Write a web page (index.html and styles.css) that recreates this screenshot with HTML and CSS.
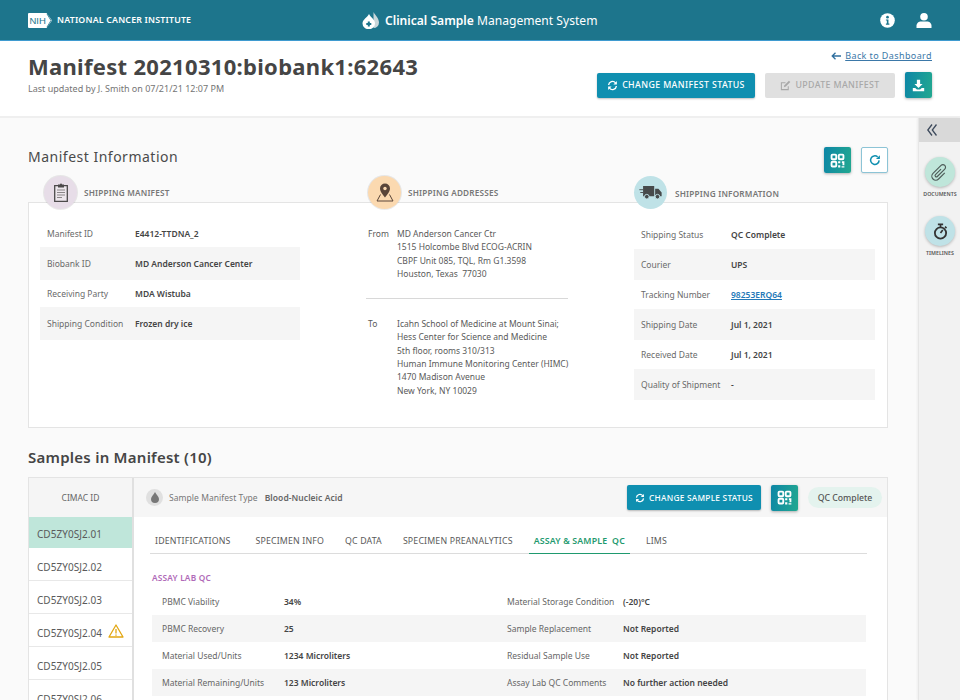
FILE: index.html
```html
<!DOCTYPE html>
<html lang="en">
<head>
<meta charset="utf-8">
<title>Manifest</title>
<link rel="stylesheet" href="styles.css">
</head>
<body>
<svg class="defs" width="0" height="0" aria-hidden="true">
  <symbol id="i-refresh" viewBox="0 0 24 24">
    <path d="M3.500 11A8.600 8.600 0 0 1 18.600 6.200" fill="none" stroke="currentColor" stroke-width="3"/>
    <path d="M21.500 2.200v7.600h-7.600z" fill="currentColor"/>
    <path d="M20.500 13A8.600 8.600 0 0 1 5.400 17.800" fill="none" stroke="currentColor" stroke-width="3"/>
    <path d="M2.500 21.800v-7.600h7.600z" fill="currentColor"/>
  </symbol>
  <symbol id="i-qr" viewBox="0 0 24 24">
    <rect x="2.500" y="2.500" width="7.500" height="7.500" rx="1.500" fill="none" stroke="currentColor" stroke-width="3"/>
    <rect x="14" y="2.500" width="7.500" height="7.500" rx="1.500" fill="none" stroke="currentColor" stroke-width="3"/>
    <rect x="2.500" y="14" width="7.500" height="7.500" rx="1.500" fill="none" stroke="currentColor" stroke-width="3"/>
    <path fill="currentColor" d="M13 13h3.500v3.500H13zM19 13h4v6.500h-3V16h-1zM13 19.500h3.500V23H13zM18.500 21h4.500v2h-4.500z"/>
  </symbol>
</svg>

<header class="topbar">
  <div class="brand">
    <svg class="nih" width="24" height="15" viewBox="0 0 24 15"><path d="M1 0h17.500l5.500 7.500-5.500 7.500H1a1 1 0 0 1-1-1V1a1 1 0 0 1 1-1z" fill="#fff"/><path d="M19 1l4 6.500-4 6.500" fill="none" stroke="#1d758c" stroke-width=".8"/><text x="1.500" y="11.300" class="nih-text">NIH</text></svg>
    <span class="nci">NATIONAL CANCER INSTITUTE</span>
  </div>
  <div class="app">
    <svg width="17" height="18" viewBox="0 0 17 18"><path d="M11.500 1c1.500 3 5.500 6 5.500 10.500a5.500 5.500 0 0 1-5.500 5.500z" fill="#c9d7db"/><path d="M7 3c1.800 3.500 6 5.500 6 9.500a6 5.500 0 0 1-12.500 0C.500 8.500 5.200 6.500 7 3z" fill="#fff"/><path d="M5.800 10.500h2V12h1.500v2H7.800v1.500h-2V14H4.300v-2h1.500z" fill="#1d758c"/></svg>
    <span class="app-name"><b>Clinical Sample</b> Management System</span>
  </div>
  <div class="top-icons">
    <svg width="15" height="15" viewBox="0 0 16 16"><circle cx="8" cy="8" r="7.800" fill="#fff"/><circle cx="8" cy="4.400" r="1.400" fill="#1d758c"/><path d="M6.300 6.800h2.700v4.400h1v1.300H6.300v-1.300h1V8H6.300z" fill="#1d758c"/></svg>
    <svg width="16" height="15" viewBox="0 0 16 15"><circle cx="8" cy="3.800" r="3.800" fill="#fff"/><path d="M0.500 15v-2.300C0.500 10 3 8.500 5 8.500h6c2 0 4.500 1.500 4.500 4.200V15z" fill="#fff"/></svg>
  </div>
</header>

<section class="pagehead">
  <div class="pagehead-text">
    <h1>Manifest 20210310:biobank1:62643</h1>
    <p>Last updated by J. Smith on 07/21/21 12:07 PM</p>
  </div>
  <div class="pagehead-actions">
    <a class="back"><svg width="10" height="8" viewBox="0 0 10 8"><path d="M10 4H1.500M4.500 .7L1.200 4l3.300 3.300" fill="none" stroke="#2f6f9f" stroke-width="1.300"/></svg><u>Back to Dashboard</u></a>
    <div class="btn-row">
      <button class="btn btn-blue btn-manifest"><svg class="ico"><use href="#i-refresh"/></svg>CHANGE MANIFEST STATUS</button>
      <button class="btn btn-off"><svg class="ico" viewBox="0 0 16 16"><path d="M12 9v5H2V4h6" fill="none" stroke="currentColor" stroke-width="1.500"/><path d="M5.500 10.500l1-3L13 1l2 2-6.500 6.500z" fill="currentColor"/></svg>UPDATE MANIFEST</button>
      <button class="btn-square grad"><svg width="13" height="13" viewBox="0 0 16 16"><path d="M6 1h4v5h3L8 11 3 6h3z" fill="#fff"/><path d="M1 11h3l2 2h4l2-2h3v4H1z" fill="#fff"/></svg></button>
    </div>
  </div>
</section>

<div class="layout">
  <main class="content">
    <div class="info-head">
      <h2>Manifest Information</h2>
      <div class="info-tools">
        <button class="btn-square grad"><svg class="qr"><use href="#i-qr"/></svg></button>
        <button class="btn-square outline"><svg width="12" height="12" viewBox="0 0 16 16"><path d="M13.500 8.500A5.700 5.700 0 1 1 11.500 3.800" fill="none" stroke="#0f8fb0" stroke-width="2"/><path d="M14.500 1.500v5.200H9.300z" fill="#0f8fb0"/></svg></button>
      </div>
    </div>

    <div class="info-heads">
      <div class="ih ih-a">
        <span class="disc disc-purple"><svg width="14" height="19" viewBox="0 0 14 19"><path d="M.7 2.700h12.600v15.600H.7z" fill="#ece6ec" stroke="#4c4a4b" stroke-width="1.300"/><path d="M4 1.500h2a1 1 0 0 1 2 0h2v3H4z" fill="#4c4a4b"/><path d="M3 7h8M3 9.500h8M3 12h8M3 14.500h5" stroke="#8a8688" stroke-width="1"/></svg></span>
        <span class="ih-label">SHIPPING MANIFEST</span>
      </div>
      <div class="ih ih-b">
        <span class="disc disc-orange"><svg width="18" height="19" viewBox="0 0 18 19"><path d="M4.500 11.500L1 18h16l-3.500-6.500" fill="none" stroke="#5a4538" stroke-width="1"/><path d="M9 .5a5 5 0 0 1 5 5C14 9 9 14.500 9 14.500S4 9 4 5.500a5 5 0 0 1 5-5z" fill="#5a4538"/><circle cx="9" cy="5.500" r="1.700" fill="#fbd9b0"/></svg></span>
        <span class="ih-label">SHIPPING ADDRESSES</span>
      </div>
      <div class="ih ih-c">
        <span class="disc disc-blue"><svg width="23" height="13" viewBox="0 0 24 14"><path d="M4 0h12v11H4zM17 3h3.500L24 7v4h-7z" fill="#464a4b"/><path d="M0 4h4M1 7h3" stroke="#464a4b"/><circle cx="8" cy="11.500" r="2.500" fill="#464a4b" stroke="#bfe2e7"/><circle cx="19.500" cy="11.500" r="2.500" fill="#464a4b" stroke="#bfe2e7"/></svg></span>
        <span class="ih-label">SHIPPING INFORMATION</span>
      </div>
    </div>

    <div class="info-card">
      <dl class="kv kv-left">
        <div><dt>Manifest ID</dt><dd>E4412-TTDNA_2</dd></div>
        <div><dt>Biobank ID</dt><dd>MD Anderson Cancer Center</dd></div>
        <div><dt>Receiving Party</dt><dd>MDA Wistuba</dd></div>
        <div><dt>Shipping Condition</dt><dd>Frozen dry ice</dd></div>
      </dl>
      <div class="addr">
        <div class="addr-row addr-from">
          <span class="addr-k">From</span>
          <address>MD Anderson Cancer Ctr<br>1515 Holcombe Blvd ECOG-ACRIN<br>CBPF Unit 085, TQL, Rm G1.3598<br>Houston, Texas&nbsp; 77030</address>
        </div>
        <div class="addr-row">
          <span class="addr-k">To</span>
          <address>Icahn School of Medicine at Mount Sinai;<br>Hess Center for Science and Medicine<br>5th floor, rooms 310/313<br>Human Immune Monitoring Center (HIMC)<br>1470 Madison Avenue<br>New York, NY 10029</address>
        </div>
      </div>
      <dl class="kv kv-right">
        <div><dt>Shipping Status</dt><dd>QC Complete</dd></div>
        <div><dt>Courier</dt><dd>UPS</dd></div>
        <div><dt>Tracking Number</dt><dd><a class="link">98253ERQ64</a></dd></div>
        <div><dt>Shipping Date</dt><dd>Jul 1, 2021</dd></div>
        <div><dt>Received Date</dt><dd>Jul 1, 2021</dd></div>
        <div><dt>Quality of Shipment</dt><dd>-</dd></div>
      </dl>
    </div>

    <h2 class="samples-title">Samples in Manifest (10)</h2>

    <div class="samples">
      <div class="ids">
        <div class="ids-head">CIMAC ID</div>
        <div class="id id-on">CD5ZY0SJ2.01</div>
        <div class="id">CD5ZY0SJ2.02</div>
        <div class="id">CD5ZY0SJ2.03</div>
        <div class="id">CD5ZY0SJ2.04<svg class="warn" width="16" height="14" viewBox="0 0 16 14"><path d="M8 1l7 12H1z" fill="none" stroke="#e2a713" stroke-width="1.300" stroke-linejoin="round"/><path d="M8 5v4.500M8 10.500v1.200" stroke="#e2a713" stroke-width="1.300"/></svg></div>
        <div class="id">CD5ZY0SJ2.05</div>
        <div class="id">CD5ZY0SJ2.06</div>
      </div>
      <div class="detail">
        <div class="detail-head">
          <span class="drop"><svg width="8" height="11" viewBox="0 0 8 11"><path d="M4 0c1 2.500 4 4.500 4 7a4 4 0 0 1-8 0c0-2.500 3-4.500 4-7z" fill="#777"/></svg></span>
          <span class="type-k">Sample Manifest Type</span>
          <span class="type-v">Blood-Nucleic Acid</span>
          <button class="btn btn-blue btn-sample"><svg class="ico"><use href="#i-refresh"/></svg>CHANGE SAMPLE STATUS</button>
          <button class="btn-square grad"><svg class="qr"><use href="#i-qr"/></svg></button>
          <span class="pill">QC Complete</span>
        </div>
        <nav class="tabs">
          <span class="tab tab-first">IDENTIFICATIONS</span>
          <span class="tab">SPECIMEN INFO</span>
          <span class="tab">QC DATA</span>
          <span class="tab">SPECIMEN PREANALYTICS</span>
          <span class="tab tab-on">ASSAY &amp; SAMPLE&nbsp; QC</span>
          <span class="tab">LIMS</span>
        </nav>
        <h3 class="qc-title">ASSAY LAB QC</h3>
        <div class="qc">
          <div class="qc-row"><span class="k1">PBMC Viability</span><b class="v1">34%</b><span class="k2">Material Storage Condition</span><b>(-20)°C</b></div>
          <div class="qc-row"><span class="k1">PBMC Recovery</span><b class="v1">25</b><span class="k2">Sample Replacement</span><b>Not Reported</b></div>
          <div class="qc-row"><span class="k1">Material Used/Units</span><b class="v1">1234 Microliters</b><span class="k2">Residual Sample Use</span><b>Not Reported</b></div>
          <div class="qc-row"><span class="k1">Material Remaining/Units</span><b class="v1">123 Microliters</b><span class="k2">Assay Lab QC Comments</span><b>No further action needed</b></div>
        </div>
      </div>
    </div>
  </main>

  <aside class="rail">
    <div class="rail-top"><svg width="10" height="12" viewBox="0 0 10 12"><path d="M5 .5L.8 6 5 11.500M9.500 .5L5.300 6l4.200 5.500" fill="none" stroke="#3d4a5c" stroke-width="1.300"/></svg></div>
    <div class="rail-item">
      <span class="rail-disc rail-green"><svg width="21" height="21" viewBox="0 0 24 24"><path transform="translate(12 12) rotate(45) translate(-5.500 -12)" d="M4 8v9a1.500 1.500 0 0 0 3 0V5a3 3 0 0 0-6 0v13a4.500 4.500 0 0 0 9 0V8" fill="none" stroke="#4d5b58" stroke-width="1.300"/></svg></span>
      <span class="rail-label">DOCUMENTS</span>
    </div>
    <div class="rail-item">
      <span class="rail-disc rail-blue"><svg width="15" height="17" viewBox="0 0 20 22"><circle cx="10" cy="13" r="7.500" fill="none" stroke="#333" stroke-width="2.400"/><path d="M6.500 1.500h7M10 1.500v4M16 4.500l2 2M10 13l3-4" fill="none" stroke="#333" stroke-width="2.200"/></svg></span>
      <span class="rail-label">TIMELINES</span>
    </div>
  </aside>
</div>
</body>
</html>
```

FILE: styles.css
```css
* { box-sizing: border-box; }
html, body { margin: 0; padding: 0; height: 700px; overflow: hidden; }
body { width: 960px; background: #fafafa; color: #4a4a4a; font-family: "Noto Sans", "Open Sans", sans-serif; font-size: 8.500px; }
.defs { position: absolute; }
button { font-family: inherit; border: 0; padding: 0; }
h1, h2, h3, p, dl, dd, dt { margin: 0; }
address { font-style: normal; }

.topbar { height: 41px; background: #1d758c; border-bottom: 1px solid #3f9bd0; display: flex; align-items: center; padding: 0 28px; color: #fff; }
.brand { display: flex; align-items: center; gap: 5px; width: 334px; }
.nih { display: block; }
.nih-text { font-family: "Liberation Sans", sans-serif; font-size: 9.500px; fill: #1d758c; }
.nci { font-weight: 600; font-size: 8.800px; letter-spacing: .2px; }
.app { display: flex; align-items: center; gap: 6px; }
.app-name { font-size: 12.100px; }
.app-name b { font-weight: 600; }
.top-icons { margin-left: auto; display: flex; gap: 21px; }

.pagehead { height: 77px; background: #fff; border-bottom: 2px solid #efefef; display: flex; justify-content: space-between; padding: 0 28px; }
h1 { font-size: 22px; line-height: 32px; font-weight: 700; margin-top: 9px; color: #454545; letter-spacing: .3px; }
.pagehead-text p { font-size: 9px; color: #757575; line-height: 14px; }
.pagehead-actions { display: flex; flex-direction: column; align-items: flex-end; }
.back { font-size: 9px; color: #3b78a8; letter-spacing: .4px; line-height: 14px; margin-top: 8px; display: flex; gap: 4px; align-items: center; }
.btn-row { display: flex; margin-top: 9px; gap: 10px; align-items: center; }
.btn { height: 25px; border-radius: 2px; display: inline-flex; align-items: center; justify-content: center; font-size: 8.800px; font-weight: 500; letter-spacing: .38px; color: #fff; gap: 4px; }
.btn-blue { background: #0f8fb0; box-shadow: 0 1px 2px rgba(0,0,0,.25); }
.btn-manifest { width: 158px; }
.btn-off { background: #e0e0e0; color: #a8a8a8; width: 130px; }
.ico { width: 11px; height: 11px; flex: none; }
.btn-square { width: 27px; height: 26px; border-radius: 2px; display: inline-flex; align-items: center; justify-content: center; flex: none; box-shadow: 0 1px 3px rgba(0,0,0,.3); }
.grad { background: linear-gradient(100deg, #0d86a6, #22a890); color: #fff; }
.outline { background: #fff; border: 1px solid #8cc4d6; box-shadow: 0 1px 2px rgba(0,0,0,.12); }
.qr { width: 15px; height: 15px; color: #fff; }

.layout { display: flex; height: 582px; }
.content { width: 918px; padding: 0 30px 0 28px; flex: none; }
.info-head { display: flex; justify-content: space-between; height: 55px; align-items: flex-end; }
.info-head h2 { font-size: 14px; font-weight: 400; letter-spacing: .5px; color: #4a4a4a; line-height: 22px; margin-bottom: 5px; }
.info-tools { display: flex; gap: 10px; }
.info-heads { display: flex; height: 29px; position: relative; }
.ih { display: flex; align-items: center; gap: 7px; height: 33px; margin-top: 3px; position: relative; z-index: 1; }
.ih-a { padding-left: 16px; width: 340px; }
.ih-b { width: 266px; }
.ih-c { gap: 8px; }
.ih-c .ih-label { padding-top: 2px; }
.ih-label { font-size: 8.200px; font-weight: 600; letter-spacing: .2px; color: #777; }
.disc { width: 33px; height: 33px; border-radius: 50%; display: flex; align-items: center; justify-content: center; flex: none; box-shadow: 0 0 0 1px rgba(0,0,0,.08); }
.disc-purple { background: #e7dde8; }
.disc-orange { background: #fbd9b0; }
.disc-blue { background: #bfe2e7; box-shadow: none; }

.info-card { height: 226px; background: #fff; border: 1px solid #e4e4e4; display: flex; padding: 0 11px; }
.kv > div { display: flex; align-items: center; padding-left: 7px; }
.kv dt { color: #6a6a6a; }
.kv dd { font-weight: 600; color: #454545; }
.kv-left { width: 260px; padding-top: 17px; }
.kv-left > div:nth-child(odd) { height: 27px; }
.kv-left > div:nth-child(even) { height: 33px; background: #f5f5f5; }
.kv-left dt { width: 88px; }
.kv-right { width: 241px; padding-top: 17px; margin-left: 66px; }
.kv-right > div:nth-child(odd) { height: 29px; }
.kv-right > div:nth-child(even) { height: 31px; background: #f5f5f5; }
.kv-right dt { width: 90px; }
.link { color: #2479b8; text-decoration: underline; }
.addr { width: 202px; margin-left: 66px; padding-top: 24px; line-height: 13.300px; color: #5a5a5a; }
.addr-row { display: flex; gap: 8px; }
.addr-from { padding-bottom: 18px; border-bottom: 1px solid #d8d8d8; margin-bottom: 18px; }
.addr-k { width: 21px; flex: none; margin-left: 2px; }
.addr address { white-space: nowrap; }

.samples-title { font-size: 15px; line-height: 22px; font-weight: 600; margin-top: 18px; color: #454545; letter-spacing: .25px; }
.samples { display: flex; margin-top: 9px; height: 240px; border: 1px solid #e4e4e4; background: #fff; }
.ids { width: 105px; border-right: 2px solid #e0e0e0; flex: none; }
.ids-head { height: 39px; background: #f5f5f5; display: flex; align-items: center; justify-content: center; color: #666; }
.id { height: 33px; border-bottom: 1px solid #e8e8e8; display: flex; align-items: center; padding: 5px 0 0 8px; font-size: 10px; color: #5a5a5a; letter-spacing: .05px; gap: 6px; }
.id-on { background: #bfe6da; height: 31px; border-bottom: 0; padding-top: 2px; }
.warn { flex: none; margin-top: -4px; }
.detail { flex: 1; min-width: 0; }
.detail-head { height: 39px; background: #f6f6f6; display: flex; align-items: center; padding: 0 5px 0 12px; }
.drop { width: 17px; height: 17px; background: #e0e0e0; border-radius: 50%; display: flex; align-items: center; justify-content: center; margin-right: 6px; }
.type-k { color: #777; margin-right: 7px; letter-spacing: .05px; }
.type-v { color: #666; font-weight: 600; letter-spacing: .05px; }
.btn-sample { width: 134px; margin-left: auto; margin-right: 10px; font-size: 8.300px; letter-spacing: .25px; }
.btn-sample .ico { width: 10px; height: 10px; }
.pill { margin-left: 10px; width: 74px; height: 21px; background: #e4f3ee; border-radius: 11px; display: flex; align-items: center; justify-content: center; color: #555; font-weight: 500; font-size: 8.700px; }
.tabs { display: flex; margin: 9px 20px 0 16px; height: 28px; border-bottom: 1px solid #dcdcdc; align-items: stretch; }
.tab { padding: 2px 5px 0; margin-right: 11px; font-size: 8.800px; letter-spacing: .15px; color: #5a5a5a; display: flex; align-items: center; }
.tab-first { margin-right: 15px; }
.tab-on { color: #1f9a6f; font-weight: 600; border-bottom: 1px solid #1f9a6f; margin-bottom: -1px; }
.qc-title { font-size: 8.300px; font-weight: 600; color: #b06ab8; letter-spacing: .2px; margin: 17px 0 0 18px; line-height: 14px; }
.qc { margin: 3px 21px 0 18px; }
.qc-row { height: 27px; display: flex; align-items: center; padding-left: 10px; }
.qc-row:nth-child(even) { background: #f5f5f5; }
.qc-row span { color: #666; }
.qc-row b { font-weight: 600; color: #454545; }
.k1 { width: 122px; }
.v1 { width: 223px; }
.k2 { width: 116px; }

.rail { width: 42px; flex: none; background: #f2f2f2; border-left: 1px solid #e6e6e6; box-shadow: -1px 0 2px rgba(0,0,0,.05); display: flex; flex-direction: column; align-items: center; }
.rail-top { width: 100%; height: 24px; background: #d9d9d9; display: flex; align-items: center; padding-left: 8px; margin-bottom: 15px; }
.rail-item { display: flex; flex-direction: column; align-items: center; height: 59px; padding-left: 1px; }
.rail-disc { width: 30px; height: 30px; border-radius: 50%; display: flex; align-items: center; justify-content: center; box-shadow: 0 1px 3px rgba(0,0,0,.25); }
.rail-green { background: #bfe6da; }
.rail-blue { background: #bfe2e7; }
.rail-label { font-size: 5.300px; color: #555; margin-top: 3px; font-weight: 600; line-height: 8px; }
```
